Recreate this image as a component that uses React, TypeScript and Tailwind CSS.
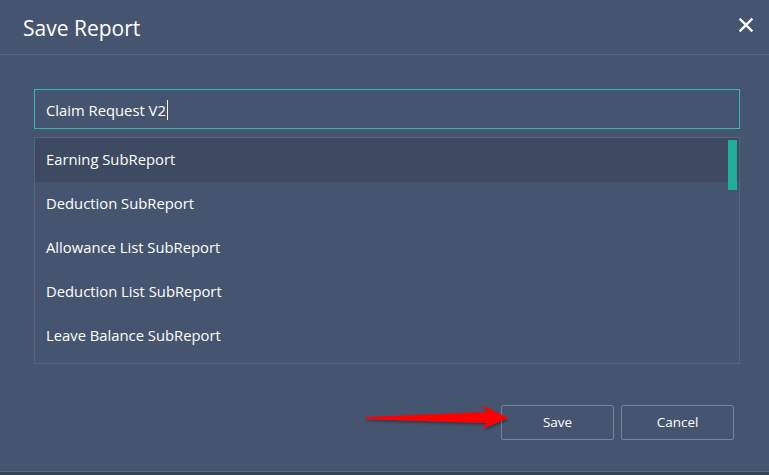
import React from "react";

const items = [
  "Earning SubReport",
  "Deduction SubReport",
  "Allowance List SubReport",
  "Deduction List SubReport",
  "Leave Balance SubReport",
];

export default function App() {
  return (
    <div
      className="relative w-[769px] h-[475px] overflow-hidden bg-[#374256]"
      style={{ fontFamily: "'Segoe UI', 'Open Sans', 'Noto Sans', sans-serif" }}
    >
      <div className="h-[472px] bg-[#46556f] border-b border-[#5a6882] flex flex-col">
        <div className="h-[55px] border-b border-[#55637c] flex items-center justify-between pl-[23px] pr-[15px]">
          <span className="text-[21px] text-white leading-none pt-[2px]">Save Report</span>
          <svg width="16" height="16" viewBox="0 0 16 16" className="mb-[4px]">
            <path d="M2.5 2.5 L13.5 13.5 M13.5 2.5 L2.5 13.5" stroke="white" strokeWidth="2.4" strokeLinecap="square" />
          </svg>
        </div>
        <div className="pl-[34px] pr-[29px] pt-[34px] flex flex-col">
          <div className="h-[40px] border border-[#35b9a8] flex items-center pl-[11px] pt-[2px]">
            <span className="text-[14.8px] text-white">Claim Request V2</span>
            <span className="w-px h-[20px] bg-white ml-[1px]" />
          </div>
          <div className="mt-[8px] h-[227px] border border-[#56647c] relative">
            {items.map((t, i) => (
              <div
                key={t}
                className={`h-[44px] flex items-center pl-[11px] pb-[2px] text-[14.8px] text-white ${i === 0 ? "bg-[#3d4a62]" : ""}`}
              >
                {t}
              </div>
            ))}
            <div className="absolute right-[2px] top-[2px] w-[9px] h-[50px] bg-[#1fae97]" />
          </div>
          <div className="mt-[41px] flex justify-end gap-[7px] pr-[6px]">
            <button className="w-[113px] h-[35px] border border-[#76839a] rounded-[2px] text-[13.5px] text-white">
              Save
            </button>
            <button className="w-[113px] h-[35px] border border-[#76839a] rounded-[2px] text-[13.5px] text-white">
              Cancel
            </button>
          </div>
        </div>
      </div>
      <svg className="absolute left-0 top-0" width="769" height="475" viewBox="0 0 769 475">
        <defs>
          <filter id="sh" x="-10%" y="-50%" width="120%" height="200%">
            <feDropShadow dx="1" dy="2" stdDeviation="1.5" floodColor="#000" floodOpacity="0.35" />
          </filter>
        </defs>
        <polygon
          points="366,417 487,412 482,405 508,418 482,429 487,423 366,419"
          fill="#ff0000"
          filter="url(#sh)"
        />
      </svg>
    </div>
  );
}
